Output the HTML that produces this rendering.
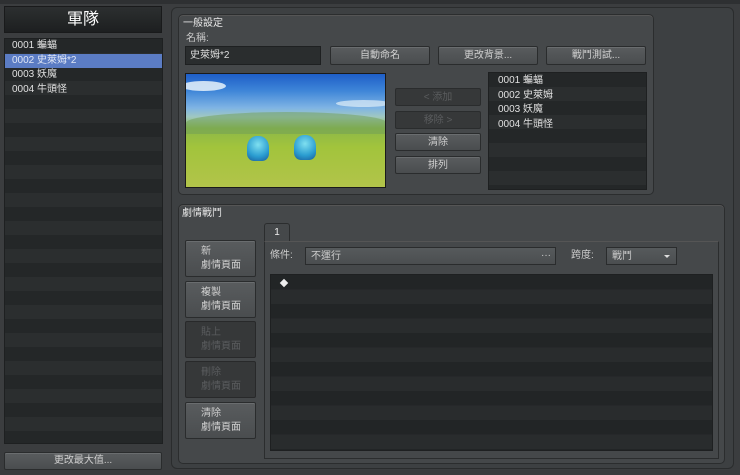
<!DOCTYPE html>
<html><head><meta charset="utf-8"><style>
*{box-sizing:border-box;margin:0;padding:0}
body{width:740px;height:475px;background:#3b3d3f;position:relative;overflow:hidden;font-family:"Liberation Sans","Noto Sans CJK TC",sans-serif;font-size:10px;color:#d8d8d8}
.a{position:absolute}
.btn{position:absolute;background:linear-gradient(#595c5e,#4a4d4f);border:1px solid #2a2c2d;border-radius:2px;color:#d0d0d0;text-align:center;line-height:17px;font-size:10px;box-shadow:inset 0 1px 0 #6a6d6f}
.dis{background:#363839;color:#5a5c5e;box-shadow:none}
.list{position:absolute;border:1px solid #1e2021;background:repeating-linear-gradient(#242728 0 14px,#2b2e2f 14px 28px)}
.list div{height:14.6px;line-height:14.6px;padding-left:7px;font-size:10px;color:#e0e0e0}
.grp{position:absolute;border:1px solid #2b2d2e;border-radius:5px;background:#45484a;box-shadow:inset 0 1px 0 #555}
.tb{position:absolute;font-size:10px;line-height:12px}
</style></head><body>
<div class="a" style="left:0;top:0;width:740px;height:4px;background:#2e3032"></div>
<div class="a" style="left:4px;top:6px;width:158px;height:27px;background:linear-gradient(#2c2f30,#1d1f20);border:1px solid #191a1b;color:#fff;font-size:16px;text-align:center;line-height:25px">軍隊</div>
<div class="list" style="left:4px;top:38px;width:159px;height:406px">
<div>0001 蝙蝠</div><div style="background:#5b7cc4;color:#dfe6f5">0002 史萊姆*2</div><div>0003 妖魔</div><div>0004 牛頭怪</div></div>
<div class="btn" style="left:4px;top:452px;width:158px;height:18px;line-height:16px">更改最大值...</div>

<div class="a" style="left:171px;top:7px;width:563px;height:462px;border:1px solid #2a2c2d;border-radius:6px;background:#3d4042"></div>
<div class="grp" style="left:178px;top:14px;width:476px;height:181px"></div>
<div class="tb a" style="left:183px;top:18px;color:#e8e8e8">一般設定</div>
<div class="tb a" style="left:186px;top:33px;color:#c8c8c8">名稱:</div>
<div class="a" style="left:185px;top:46px;width:136px;height:19px;background:#2a2d2e;border:1px solid #1e2021;line-height:18px;padding-left:4px;color:#ddd">史萊姆*2</div>
<div class="btn" style="left:330px;top:46px;width:100px;height:19px">自動命名</div>
<div class="btn" style="left:438px;top:46px;width:100px;height:19px">更改背景...</div>
<div class="btn" style="left:546px;top:46px;width:100px;height:19px">戰鬥測試...</div>
<div class="a" style="left:185px;top:73px;width:201px;height:115px;border:1px solid #1a1a1a;background:linear-gradient(#1e5ec8 0%,#3f86d8 15%,#7fb4e4 30%,#a0c8c0 38%,#8cb848 48%,#a2c43c 65%,#b2c44a 100%);overflow:hidden">
<div class="a" style="left:-5px;top:7px;width:45px;height:10px;background:#e8f2fa;border-radius:50%;opacity:.85"></div>
<div class="a" style="left:150px;top:26px;width:55px;height:7px;background:#e0eef8;border-radius:50%;opacity:.7"></div>
<div class="a" style="left:0;top:38px;width:201px;height:22px;background:#6f9e58;border-radius:50% 50% 0 0;opacity:.5"></div>
<div class="a" style="left:61px;top:62px;width:22px;height:25px;background:radial-gradient(circle at 50% 35%,#7fe0f0,#2a9cd0 60%,#1a5c9c);border-radius:45% 45% 30% 30%"></div>
<div class="a" style="left:108px;top:61px;width:22px;height:25px;background:radial-gradient(circle at 50% 35%,#7fe0f0,#2a9cd0 60%,#1a5c9c);border-radius:45% 45% 30% 30%"></div>
</div>
<div class="btn dis" style="left:395px;top:88px;width:86px;height:18px">&lt; 添加</div>
<div class="btn dis" style="left:395px;top:111px;width:86px;height:18px">移除 &gt;</div>
<div class="btn" style="left:395px;top:133px;width:86px;height:18px">清除</div>
<div class="btn" style="left:395px;top:156px;width:86px;height:18px">排列</div>
<div class="list" style="left:488px;top:72px;width:159px;height:118px;padding-top:1px">
<div style="padding-left:9px">0001 蝙蝠</div><div style="padding-left:9px">0002 史萊姆</div><div style="padding-left:9px">0003 妖魔</div><div style="padding-left:9px">0004 牛頭怪</div></div>

<div class="grp" style="left:178px;top:204px;width:547px;height:260px"></div>
<div class="tb a" style="left:182px;top:208px;color:#e8e8e8">劇情戰鬥</div>
<div class="a" style="left:264px;top:223px;width:26px;height:19px;background:#45484a;border:1px solid #2b2d2e;border-bottom:none;border-radius:3px 3px 0 0;text-align:center;line-height:18px;color:#eee">1</div>
<div class="a" style="left:264px;top:241px;width:455px;height:218px;background:#45484a;border:1px solid #2b2d2e;border-top-color:#555"></div>
<div class="btn tb" style="left:185px;top:240px;width:71px;height:37px;text-align:left;padding:4px 0 0 15px;line-height:14px">新<br>劇情頁面</div>
<div class="btn tb" style="left:185px;top:281px;width:71px;height:37px;text-align:left;padding:4px 0 0 15px;line-height:14px">複製<br>劇情頁面</div>
<div class="btn dis tb" style="left:185px;top:321px;width:71px;height:37px;text-align:left;padding:4px 0 0 15px;line-height:14px;border-color:#28292a">貼上<br>劇情頁面</div>
<div class="btn dis tb" style="left:185px;top:361px;width:71px;height:37px;text-align:left;padding:4px 0 0 15px;line-height:14px;border-color:#28292a">刪除<br>劇情頁面</div>
<div class="btn tb" style="left:185px;top:402px;width:71px;height:37px;text-align:left;padding:4px 0 0 15px;line-height:14px">清除<br>劇情頁面</div>
<div class="tb a" style="left:270px;top:250px;color:#ccc">條件:</div>
<div class="a" style="left:305px;top:247px;width:251px;height:18px;background:linear-gradient(#565a5c,#4b4e50);border:1px solid #2a2c2d;line-height:17px;padding-left:5px;color:#ccc">不運行<span style="position:absolute;right:4px;top:-1px">···</span></div>
<div class="tb a" style="left:571px;top:250px;color:#ccc">跨度:</div>
<div class="a" style="left:606px;top:247px;width:71px;height:18px;background:linear-gradient(#565a5c,#4b4e50);border:1px solid #2a2c2d;line-height:17px;padding-left:5px;color:#ccc">戰鬥<span style="position:absolute;right:6px;top:7px;border:3px solid transparent;border-top:3px solid #ddd"></span></div>
<div class="list" style="left:270px;top:274px;width:443px;height:177px;background:repeating-linear-gradient(#222526 0 14.5px,#292c2d 14.5px 29px)"></div>
<div class="a" style="left:281px;top:280px;width:6px;height:6px;background:#eee;transform:rotate(45deg)"></div>
</body></html>
